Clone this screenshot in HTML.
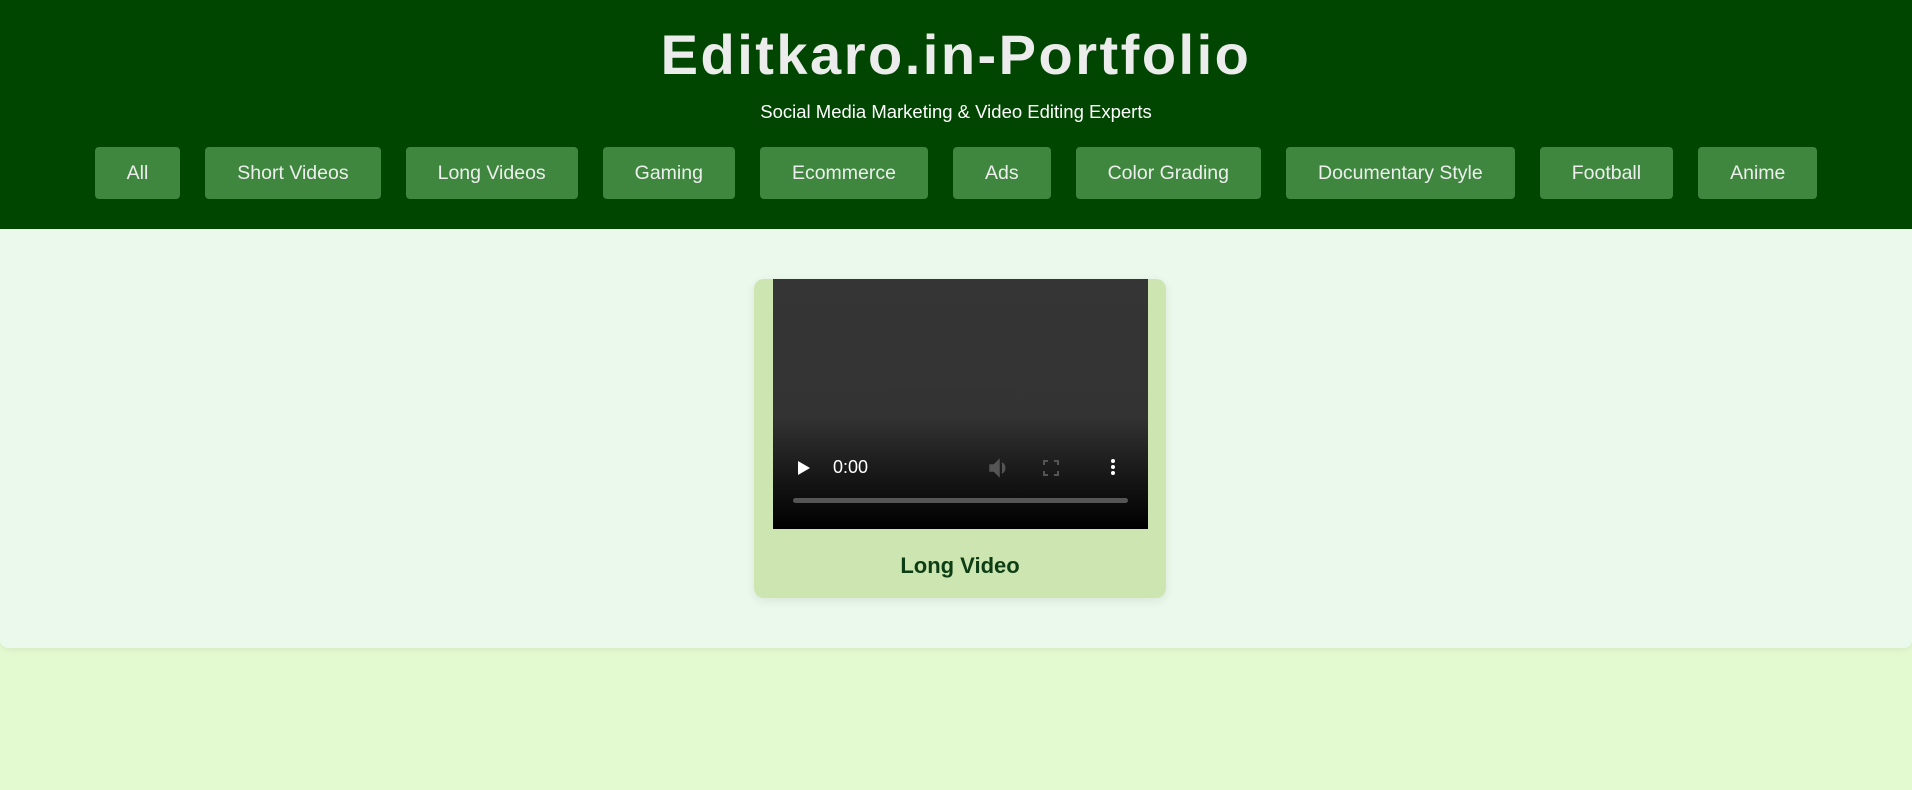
<!DOCTYPE html>
<html><head><meta charset="utf-8"><style>
*{box-sizing:border-box;margin:0;padding:0}
body{width:1912px;height:790px;background:#e3f9d0;font-family:"Liberation Sans",Arial,sans-serif;overflow:hidden}
header{background:#004600;height:229px;text-align:center;color:#eee;padding-top:22px}
h1{font-size:56px;font-weight:bold;letter-spacing:2.5px;line-height:66px;color:#ececec}
.sub{font-size:18.5px;color:#fff;margin-top:13px;line-height:22px}
nav{display:flex;justify-content:center;gap:25px;margin-top:24px}
nav span{background:#3f873f;color:#eee;font-size:19.5px;height:52px;line-height:52px;padding:0 32px;border-radius:4px}
main{background:#ebf9ec;height:419px;border-radius:0 0 8px 8px;position:relative;box-shadow:0 2px 6px rgba(0,0,0,.06)}
.card{position:absolute;left:754px;top:50px;width:412px;height:319px;background:#cce5b1;border-radius:10px;box-shadow:0 3px 10px rgba(0,0,0,.08)}
.vid{position:absolute;left:19px;top:0;width:375px;height:250px;background:linear-gradient(#353535 0,#333 55%,#161616 80%,#000 100%)}
.t{position:absolute;top:273px;width:100%;text-align:center;font-size:22px;font-weight:bold;color:#0d3d14;line-height:28px}
.time{position:absolute;left:60px;top:178px;color:#fff;font-size:18px}
.bar{position:absolute;left:20px;right:20px;top:219px;height:5px;border-radius:3px;background:#555}
</style></head><body>
<header>
<h1>Editkaro.in-Portfolio</h1>
<div class="sub">Social Media Marketing &amp; Video Editing Experts</div>
<nav><span>All</span><span>Short Videos</span><span>Long Videos</span><span>Gaming</span><span>Ecommerce</span><span>Ads</span><span>Color Grading</span><span>Documentary Style</span><span>Football</span><span>Anime</span></nav>
</header>
<main>
<div class="card">
<div class="vid">
<svg style="position:absolute;left:24px;top:181px" width="14" height="16"><path d="M1 1L13 8L1 15Z" fill="#fff"/></svg>
<div class="time">0:00</div>
<svg style="position:absolute;left:215px;top:179px" width="22" height="20"><path d="M2 7h4l5-5v16l-5-5H2z M14 5a6 6 0 0 1 0 10" fill="#555" stroke="#555" stroke-width="1.5"/></svg>
<svg style="position:absolute;left:270px;top:181px" width="16" height="16" fill="none" stroke="#555" stroke-width="2"><path d="M1 5V1h4M11 1h4v4M15 11v4h-4M5 15H1v-4"/></svg>
<svg style="position:absolute;left:337px;top:179px" width="6" height="18" fill="#fff"><circle cx="3" cy="3" r="2"/><circle cx="3" cy="9" r="2"/><circle cx="3" cy="15" r="2"/></svg>
<div class="bar"></div>
</div>
<div class="t">Long Video</div>
</div>
</main>
</body></html>
